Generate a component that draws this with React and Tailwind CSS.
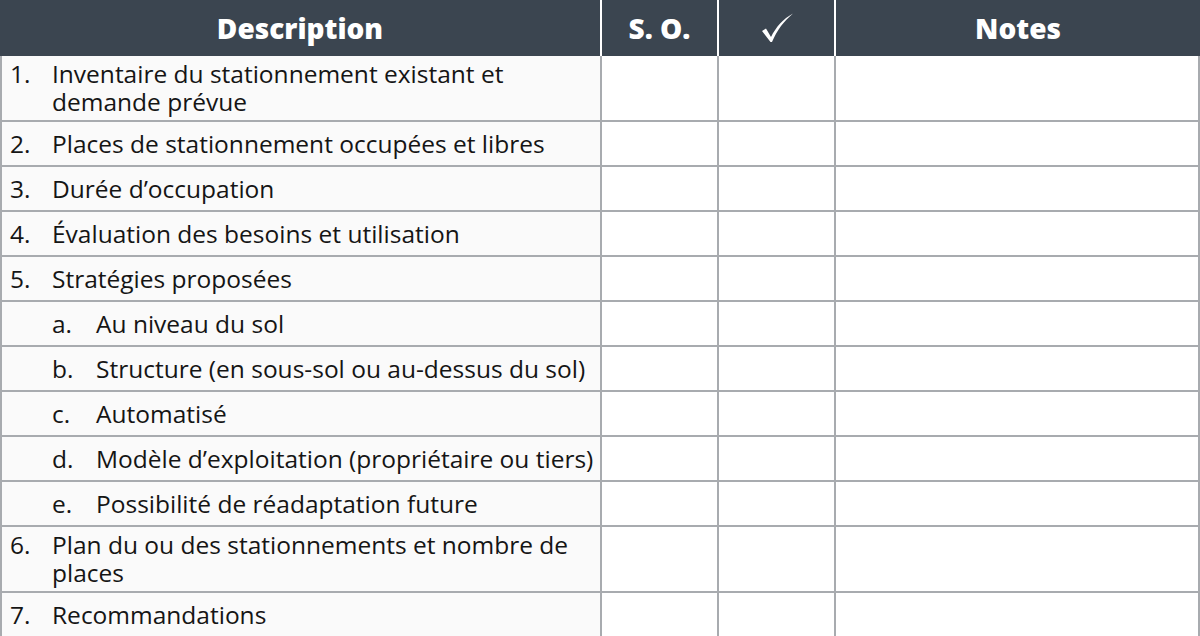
import React from 'react';

const rows = [
    { n: '1.', text: 'Inventaire du stationnement existant et demande prévue', tall: true },
    { n: '2.', text: 'Places de stationnement occupées et libres' },
    { n: '3.', text: 'Durée d’occupation' },
    { n: '4.', text: 'Évaluation des besoins et utilisation' },
    { n: '5.', text: 'Stratégies proposées' },
    { n: 'a.', text: 'Au niveau du sol', sub: true },
    { n: 'b.', text: 'Structure (en sous-sol ou au-dessus du sol)', sub: true },
    { n: 'c.', text: 'Automatisé', sub: true },
    { n: 'd.', text: 'Modèle d’exploitation (propriétaire ou tiers)', sub: true },
    { n: 'e.', text: 'Possibilité de réadaptation future', sub: true },
    { n: '6.', text: 'Plan du ou des stationnements et nombre de places', tall: true },
    { n: '7.', text: 'Recommandations' },
];

const App = () => {
    return (
        <div className="w-[1200px] h-[636px] bg-white text-[#151515] overflow-hidden" style={{ fontFamily: '"Open Sans", "Noto Sans", sans-serif' }}>
            <div className="grid grid-cols-[600px_117px_117px_366px] h-[56px] bg-[#3b4550] text-white font-extrabold">
                <div className="flex items-center justify-center text-[28px]">Description</div>
                <div className="flex items-center justify-center text-[28px] border-l-2 border-white">S. O.</div>
                <div className="flex items-center justify-center border-l-2 border-white">
                    <svg width="34" height="30" viewBox="0 0 34 30">
                        <path d="M2 18 L6 15.5 L11 24 C16 14 23 6 33 0.5 C24 8 17 17 12 29 L10.5 29 Z" fill="white" />
                    </svg>
                </div>
                <div className="flex items-center justify-center text-[28px] border-l-2 border-white">Notes</div>
            </div>
            {rows.map((r, i) => (
                <div
                    key={i}
                    className={`grid grid-cols-[600px_117px_117px_366px] border-b-2 border-[#a8abaf] ${r.tall ? 'h-[66px]' : 'h-[45px]'}`}
                >
                    <div className="flex items-center bg-[#fafafa] border-l-2 border-[#a8abaf] text-[24.5px] font-medium leading-[28px]">
                        <div className="flex items-baseline">
                            {r.sub ? (
                                <>
                                    <span className="w-[94px] pl-[50px] shrink-0">{r.n}</span>
                                    <span>{r.text}</span>
                                </>
                            ) : (
                                <>
                                    <span className="w-[50px] pl-[8px] shrink-0">{r.n}</span>
                                    <span className="pr-4">{r.text}</span>
                                </>
                            )}
                        </div>
                    </div>
                    <div className="border-l-2 border-[#a8abaf]" />
                    <div className="border-l-2 border-[#a8abaf]" />
                    <div className="border-l-2 border-r-2 border-[#a8abaf]" />
                </div>
            ))}
        </div>
    );
};

export default App;
